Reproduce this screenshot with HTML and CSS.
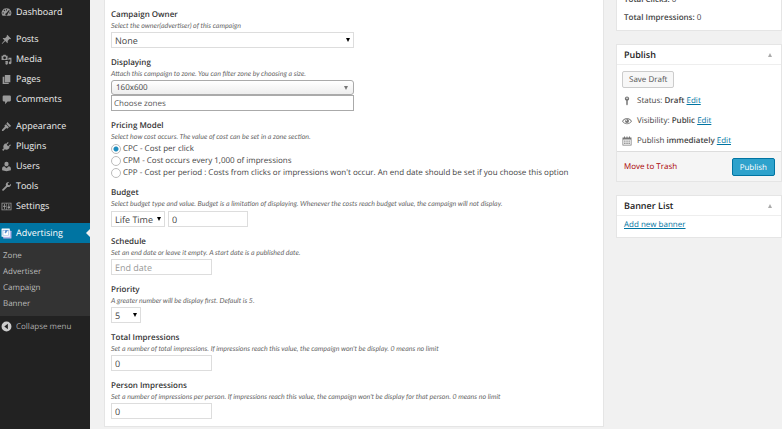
FILE: index.html
```html
<!DOCTYPE html>
<html lang="en">
<head>
    <meta charset="UTF-8">
    <meta name="viewport" content="width=device-width, initial-scale=1.0">
    <title>Edit Campaign</title>
    <link rel="stylesheet" href="styles.css">
</head>
<body>
    <div class="page">
        <nav class="sidebar">
            <ul class="menu">
                <li><a href="#"><svg viewBox="0 0 20 20"><path fill-rule="evenodd" d="M10 2.500a8.500 8.500 0 0 0-7.200 13.500h14.400A8.500 8.500 0 0 0 10 2.500zM9 4h2v2.500H9zM4.700 6l1.500-1.300 1.600 1.900-1.500 1.200zM2.800 10h2.500v2H2.800zM14.700 10h2.500v2h-2.500zM14.500 5.500l1.300 1.300-4 6.200a2 2 0 1 1-2.300-1.500z"/></svg>Dashboard</a></li>
                <li class="separator"></li>
                <li><a href="#"><svg viewBox="0 0 20 20"><path d="M10.400 3l1-1.500 7 7-1.500 1.100-1.700-.3-3.100 3.200c.6 1.500.4 3-.6 4.100l-3.700-3.700L2 18l-.7-.6L6.500 11.500 3 8.300c1.300-1 2.700-1.100 4.100-.6L10.500 4.500z"/></svg>Posts</a></li>
                <li><a href="#"><svg viewBox="0 0 20 20"><path fill-rule="evenodd" d="M1 3h2.500l1-1.500h4L9.500 3H12v8H1zM6.500 4.500a2.500 2.500 0 1 0 0 5 2.500 2.500 0 0 0 0-5zM13.500 7H19v9a2.500 2.500 0 1 1-2-2.400V10h-2.500v1h-1zM8 12.500h4.500V17A2.300 2.300 0 1 1 10.500 14.800H8z"/></svg>Media</a></li>
                <li><a href="#"><svg viewBox="0 0 20 20"><path d="M7 2h10v13H7zM3 5h3v11h8v2H3z"/></svg>Pages</a></li>
                <li><a href="#"><svg viewBox="0 0 20 20"><path d="M5 2.500h11a2 2 0 0 1 2 2v7a2 2 0 0 1-2 2h-4L7.500 18.500v-5H5a2 2 0 0 1-2-2v-7a2 2 0 0 1 2-2z"/></svg>Comments</a></li>
                <li class="separator"></li>
                <li><a href="#"><svg viewBox="0 0 20 20"><path d="M11.500 2L18.500 9l-3 1.800L9.800 5zM8.900 6l5.500 5.500-2.800 2.500-1.900-1.200L4 18c-1.500.8-3-.6-2.200-2.200L7.200 10.200 6 8.500z"/></svg>Appearance</a></li>
                <li><a href="#"><svg viewBox="0 0 20 20"><path d="M12.500 2l1.400 1.400-3.500 3.500 2.700 2.700 3.500-3.500L18 7.500 14.500 11l1.300 1.300-1.300 1.200c-2.500 2.500-5.500 3-7.700 1.500L4 18l-2-2 3-2.800C3.500 11 4 8 6.500 5.500L7.700 4.200 9 5.500z"/></svg>Plugins</a></li>
                <li><a href="#"><svg viewBox="0 0 20 20"><path d="M10 1.500a3.800 3.800 0 0 1 3.800 4c0 2.300-1.600 4.200-3.800 4.200S6.200 7.800 6.200 5.500a3.800 3.800 0 0 1 3.800-4zM6 9.500L10 13l4-3.500c2.500.5 4 2 4 4.500v3c-4.500 2-11.500 2-16 0v-3c0-2.500 1.500-4 4-4.500z"/></svg>Users</a></li>
                <li><a href="#"><svg viewBox="0 0 20 20"><path d="M16.700 9.600c-1.500 1.500-3.600 1.900-5.300 1.200L4.500 17.700a1.700 1.700 0 0 1-2.300-2.300l6.900-6.900c-.8-1.900-.4-4 1-5.400C11.500 1.700 13.300 1.400 15 1.800L12.200 4.600l.6 2.500 2.500.6 2.800-2.800c.4 1.700 0 3.400-1.400 4.700z"/></svg>Tools</a></li>
                <li><a href="#"><svg viewBox="0 0 20 20"><path fill-rule="evenodd" d="M1 3h18v14H1zM2.500 4.500v11h7v-11zM10.500 4.500v11h7v-11z"/><path d="M5.500 5.500H7v3h1.500V11H7v3.500H5.500V11H4V8.500h1.500zM13.500 5.500H15V10h1.500v2.500H15v2h-1.500v-2H12V10h1.500z"/></svg>Settings</a></li>
                <li class="separator"></li>
                <li class="current"><a href="#"><svg viewBox="0 0 20 20"><rect x="4" y="5" width="15" height="14" rx="1" fill="#b9b4e8"/><rect x="1" y="1" width="15" height="15" rx="1" fill="#fff"/><path d="M3 3.500h11v10H3z" fill="#5a8fd0"/><path d="M4 4.500h4L6.500 8l2 2 4-5.500h1V13H4z" fill="#fff"/></svg>Advertising</a>
                    <ul class="submenu">
                        <li><a href="#">Zone</a></li>
                        <li><a href="#">Advertiser</a></li>
                        <li><a href="#">Campaign</a></li>
                        <li><a href="#">Banner</a></li>
                    </ul>
                </li>
            </ul>
            <button type="button" class="collapse"><svg viewBox="0 0 20 20"><path fill-rule="evenodd" d="M10 1a9 9 0 1 0 0 18 9 9 0 0 0 0-18zM12.500 5v10L6 10z"/></svg>Collapse menu</button>
        </nav>

        <form class="content">
            <main class="panel">
                <div class="field">
                    <label class="title" for="owner">Campaign Owner</label>
                    <p>Select the owner(advertiser) of this campaign</p>
                    <select id="owner" class="wide"><option>None</option></select>
                </div>
                <div class="field">
                    <label class="title" for="size">Displaying</label>
                    <p>Attach this campaign to zone. You can filter zone by choosing a size.</p>
                    <select id="size" class="wide chosen"><option>160x600</option></select>
                    <input type="text" class="wide zones" aria-label="Choose zones" placeholder="Choose zones">
                </div>
                <div class="field" role="radiogroup" aria-labelledby="pricing">
                    <span class="title" id="pricing">Pricing Model</span>
                    <p>Select how cost occurs. The value of cost can be set in a zone section.</p>
                    <div class="radios">
                        <label><input type="radio" name="pricing" checked>CPC - Cost per click</label>
                        <label><input type="radio" name="pricing">CPM - Cost occurs every 1,000 of impressions</label>
                        <label><input type="radio" name="pricing">CPP - Cost per period : Costs from clicks or impressions won't occur. An end date should be set if you choose this option</label>
                    </div>
                </div>
                <div class="field">
                    <label class="title" for="budget">Budget</label>
                    <p>Select budget type and value. Budget is a limitation of displaying. Whenever the costs reach budget value, the campaign will not display.</p>
                    <div class="inline">
                        <select class="budget-type" aria-label="Budget type"><option>Life Time</option></select>
                        <input type="text" id="budget" class="budget-value" value="0">
                    </div>
                </div>
                <div class="field">
                    <label class="title" for="end">Schedule</label>
                    <p>Set an end date or leave it empty. A start date is a published date.</p>
                    <input type="text" id="end" placeholder="End date">
                </div>
                <div class="field">
                    <label class="title" for="priority">Priority</label>
                    <p>A greater number will be display first. Default is 5.</p>
                    <select id="priority" class="priority"><option>5</option></select>
                </div>
                <div class="field">
                    <label class="title" for="total">Total Impressions</label>
                    <p>Set a number of total impressions. If impressions reach this value, the campaign won't be display. 0 means no limit</p>
                    <input type="text" id="total" value="0">
                </div>
                <div class="field">
                    <label class="title" for="person">Person Impressions</label>
                    <p>Set a number of impressions per person. If impressions reach this value, the campaign won't be display for that person. 0 means no limit</p>
                    <input type="text" id="person" value="0">
                </div>
            </main>

            <aside class="side">
                <section class="box stats">
                    <div><b>Total Clicks:</b> 0</div>
                    <div><b>Total Impressions:</b> 0</div>
                </section>

                <section class="box">
                    <h2>Publish <span class="toggle"></span></h2>
                    <div class="publish-body">
                        <button type="button" class="button">Save Draft</button>
                        <ul class="misc">
                            <li><svg viewBox="0 0 20 20"><path fill-rule="evenodd" d="M10 1a4.500 4.500 0 0 1 1.500 8.700V17L10 19l-1.500-2V9.700A4.500 4.500 0 0 1 10 1zM10 3.200a1.500 1.500 0 1 0 0 3 1.500 1.500 0 0 0 0-3z"/></svg><span>Status: <b>Draft</b> <a href="#">Edit</a></span></li>
                            <li><svg viewBox="0 0 20 20"><path fill-rule="evenodd" d="M0 10.500C3 6 6.500 4 10 4s7 2 10 6.500C17 14.500 13.500 16.500 10 16.500S3 14.500 0 10.500zM2 10.500c2.500 3.200 5 4.500 8 4.500s5.500-1.300 8-4.500C15.500 7.200 13 5.500 10 5.500S4.500 7.200 2 10.500z"/><circle cx="10" cy="10" r="4"/><circle cx="8.500" cy="8.500" r="1.300" fill="#fff"/></svg><span>Visibility: <b>Public</b> <a href="#">Edit</a></span></li>
                            <li><svg viewBox="0 0 20 20"><path fill-rule="evenodd" d="M1 3h3V1h2v2h3V1h2v2h3V1h2v2h3v16H1zM2.500 7v10.500h15V7z"/><path d="M4.500 9H7v2.500H4.500zM8.800 9h2.500v2.500H8.800zM13 9h2.500v2.500H13zM4.500 13H7v3H4.500zM8.800 13h2.500v3H8.800zM13 13h2.500v3H13z"/></svg><span>Publish <b>immediately</b> <a href="#">Edit</a></span></li>
                        </ul>
                    </div>
                    <div class="actions">
                        <a href="#" class="trash">Move to Trash</a>
                        <button type="button" class="button primary">Publish</button>
                    </div>
                </section>

                <section class="box">
                    <h2>Banner List <span class="toggle"></span></h2>
                    <div class="banner-body"><a href="#">Add new banner</a></div>
                </section>
            </aside>
        </form>
    </div>
</body>
</html>
```
FILE: styles.css
```css
* {
    box-sizing: border-box;
}
body {
    margin: 0;
    background-color: #f1f1f1;
    color: #444;
    font-family: 'Open Sans', 'Liberation Sans', sans-serif;
    font-size: 8px;
    line-height: 12px;
    text-rendering: geometricPrecision;
}
ul, p, h2 {
    margin: 0;
    padding: 0;
}
ul {
    list-style: none;
}
a {
    color: #0074a2;
}
b {
    font-weight: 600;
}
input, select, button {
    font-family: inherit;
    font-size: 8px;
    color: #444;
    margin: 0;
    text-rendering: inherit;
}
.page {
    display: flex;
    min-height: 100vh;
}

/* left menu */
.sidebar {
    flex: none;
    width: 90px;
    padding-top: 2px;
    background-color: #222;
}
.sidebar svg {
    flex: none;
    width: 11px;
    height: 11px;
    fill: #999;
}
.menu a {
    display: flex;
    align-items: center;
    gap: 4px;
    height: 20px;
    padding-left: 1px;
    color: #eee;
    font-size: 9px;
    text-decoration: none;
}
.separator {
    height: 7px;
}
.current > a {
    position: relative;
    background-color: #0074a2;
    color: #fff;
}
.current > a::after {
    content: '';
    position: absolute;
    right: 0;
    top: 6px;
    border: 4px solid transparent;
    border-left: 0;
    border-right-color: #f1f1f1;
}
.submenu {
    padding: 5px 0 4px;
    background-color: #333;
}
.menu .submenu a {
    height: 16px;
    padding-left: 3px;
    color: #bbb;
    font-size: 8px;
}
.collapse {
    display: flex;
    align-items: center;
    gap: 4px;
    height: 20px;
    padding: 0 0 0 1px;
    border: 0;
    background: none;
    color: #aaa;
}
.collapse svg {
    fill: #ccc;
}

/* campaign form */
.content {
    flex: 1;
    display: flex;
    align-items: flex-start;
    gap: 12px;
    padding: 0 0 1px 14px;
}
.panel {
    flex: 1;
    min-width: 0;
    padding: 9px 6px 0;
    background-color: #fff;
    border: 1px solid #e5e5e5;
    border-top: 0;
}
.field {
    margin-bottom: 9px;
}
.field:last-child {
    margin-bottom: 7px;
}
.title {
    display: block;
    color: #333;
    font-weight: 600;
}
.field p {
    color: #666;
    font-family: Lato, 'Open Sans', sans-serif;
    font-size: 7px;
    font-style: italic;
    line-height: 11px;
}
.field select,
.field input[type="text"] {
    display: block;
    width: 101px;
    height: 16px;
    padding: 0 3px;
    background-color: #fff;
    border: 1px solid #ddd;
    border-radius: 0;
    outline: none;
    font-size: 9px;
}
.field select {
    appearance: none;
    background-image: url("data:image/svg+xml,%3Csvg xmlns='http://www.w3.org/2000/svg' viewBox='0 0 4 4'%3E%3Cpath d='M0 0h4L2 4z'/%3E%3C/svg%3E");
    background-repeat: no-repeat;
    background-position: right 3px center;
    background-size: 4px 4px;
}
.field ::placeholder {
    color: #999;
    opacity: 1;
}
.field select.wide,
.field input.wide {
    width: 243px;
    max-width: 100%;
}
.field select.chosen {
    height: 15px;
    padding-left: 4px;
    border-color: #aaa;
    border-radius: 3px;
    background-color: #eee;
    background-image: url("data:image/svg+xml,%3Csvg xmlns='http://www.w3.org/2000/svg' viewBox='0 0 4 4'%3E%3Cpath fill='%23777' d='M0 0h4L2 4z'/%3E%3C/svg%3E"), linear-gradient(#fff, #eee);
    background-position: right 5px center, 0 0;
    background-size: 4px 4px, 100% 100%;
    font-size: 8px;
}
.field input.zones {
    padding-left: 2px;
    border-color: #aaa;
    font-size: 8px;
}
.field .zones::placeholder {
    color: #555;
}
.radios {
    display: grid;
    gap: 1px;
}
.radios label {
    display: flex;
    align-items: center;
    gap: 2px;
    line-height: 11px;
    white-space: nowrap;
}
.radios input {
    appearance: none;
    flex: none;
    width: 10px;
    height: 10px;
    border: 1px solid #bbb;
    border-radius: 50%;
    background-color: #fff;
}
.radios input:checked {
    background-image: radial-gradient(circle, #1e8cbe 2px, transparent 3px);
}
.inline {
    display: flex;
    gap: 3px;
    padding-top: 1px;
}
.field select.budget-type {
    width: 54px;
}
.field input.budget-value {
    width: 80px;
}
.field select.priority {
    width: 30px;
}

/* right column */
.side {
    flex: none;
    width: 166px;
}
.box {
    margin-bottom: 13px;
    background-color: #fff;
    border: 1px solid #e5e5e5;
}
.stats {
    /* first box is scrolled partly out of view */
    margin-top: -10px;
    padding: 0 7px 3px;
    line-height: 18px;
}
.box h2 {
    display: flex;
    align-items: center;
    justify-content: space-between;
    height: 20px;
    padding: 0 9px 0 7px;
    border-bottom: 1px solid #eee;
    color: #222;
    font-size: 9px;
    font-weight: 600;
}
.toggle {
    border: 2px solid transparent;
    border-top: 0;
    border-bottom: 4px solid #aaa;
}
.publish-body {
    padding: 6px 5px 0;
}
.button {
    height: 17px;
    padding: 0 6px;
    background-color: #f7f7f7;
    border: 1px solid #ccc;
    border-radius: 2px;
    color: #555;
}
.misc {
    padding-top: 3px;
}
.misc li {
    display: flex;
    align-items: center;
    gap: 5px;
    height: 20px;
}
.misc svg {
    width: 10px;
    height: 10px;
    fill: #777;
}
.actions {
    display: flex;
    align-items: center;
    justify-content: space-between;
    padding: 6px 6px 5px 7px;
    background-color: #f5f5f5;
    border-top: 1px solid #ddd;
}
.trash {
    color: #a00;
    text-decoration: none;
}
.button.primary {
    height: 18px;
    padding: 0 7px;
    background-color: #2ea2cc;
    border-color: #0074a2;
    color: #fff;
}
.banner-body {
    padding: 3px 7px 6px;
}
```
